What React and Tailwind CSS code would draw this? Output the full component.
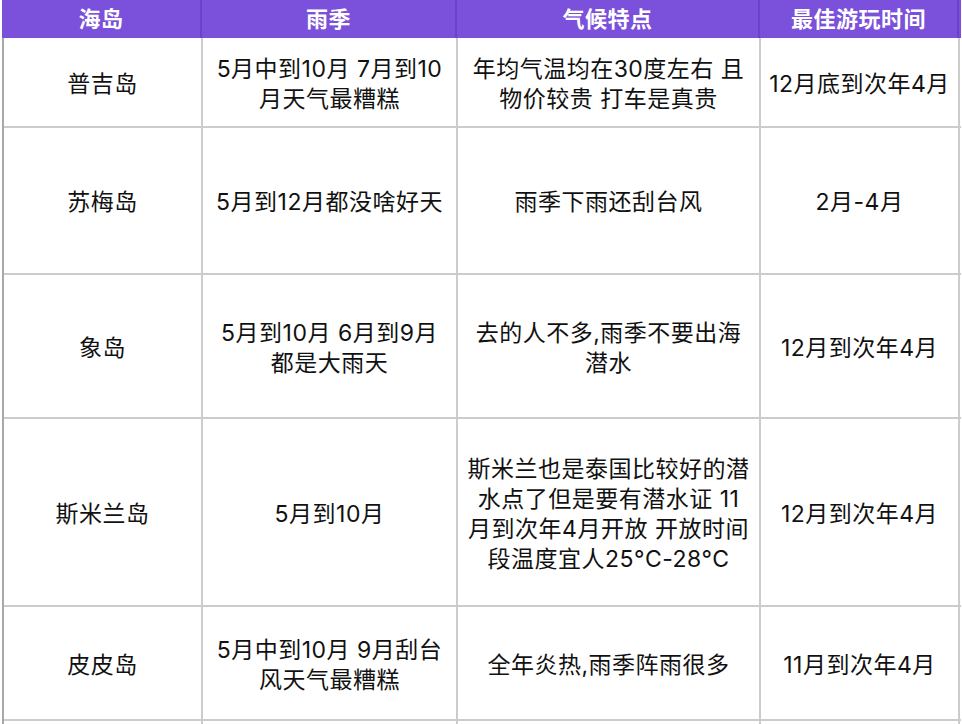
import React from "react";

const columns = [
  { title: "海岛", w: "w-[200px]" },
  { title: "雨季", w: "w-[255px]" },
  { title: "气候特点", w: "w-[303px]" },
  { title: "最佳游玩时间", w: "w-[199px]" },
];

const rows = [
  {
    h: "h-[90px]",
    cells: [["普吉岛"], ["5月中到10月 7月到10", "月天气最糟糕"], ["年均气温均在30度左右 且", "物价较贵 打车是真贵"], ["12月底到次年4月"]],
  },
  {
    h: "h-[147px]",
    cells: [["苏梅岛"], ["5月到12月都没啥好天"], ["雨季下雨还刮台风"], ["2月-4月"]],
  },
  {
    h: "h-[144px]",
    cells: [["象岛"], ["5月到10月 6月到9月", "都是大雨天"], ["去的人不多,雨季不要出海", "潜水"], ["12月到次年4月"]],
  },
  {
    h: "h-[188px]",
    cells: [
      ["斯米兰岛"],
      ["5月到10月"],
      ["斯米兰也是泰国比较好的潜", "水点了但是要有潜水证 11", "月到次年4月开放 开放时间", "段温度宜人25°C-28°C"],
      ["12月到次年4月"],
    ],
  },
  {
    h: "h-[114px]",
    cells: [["皮皮岛"], ["5月中到10月 9月刮台", "风天气最糟糕"], ["全年炎热,雨季阵雨很多"], ["11月到次年4月"]],
  },
  {
    h: "h-[60px]",
    cells: [[""], [""], [""], [""]],
  },
];

const Cell = ({ lines, w }) => (
  <div className={`${w} shrink-0 flex items-center justify-center border-r-2 border-[#cccccc] px-1 pt-[3px] text-center`}>
    <p className="whitespace-nowrap text-[23px] leading-[30px] tracking-[0.5px] text-[#111111]">
      {lines.map((line, i) => (
        <React.Fragment key={i}>
          {i > 0 && <br />}
          {line}
        </React.Fragment>
      ))}
    </p>
  </div>
);

export default function App() {
  return (
    <div
      className="w-[962px] h-[724px] overflow-hidden bg-white"
      style={{ fontFamily: 'Inter, "Noto Sans CJK SC", "Noto Sans", sans-serif' }}
    >
      <div className="ml-[2px] w-[959px]">
        <div className="flex h-[38px] bg-[#7b50da]">
          {columns.map((c) => (
            <div
              key={c.title}
              className={`${c.w} shrink-0 flex items-center justify-center border-r-2 border-[#6c42c8] text-[22px] font-bold tracking-[0.5px] text-white`}
            >
              {c.title}
            </div>
          ))}
        </div>
        <div className="border-l-2 border-[#a8a8a8]">
          {rows.map((r, i) => (
            <div key={i} className={`flex ${r.h} border-b-2 border-[#cccccc]`}>
              {r.cells.map((lines, j) => (
                <Cell key={j} lines={lines} w={j === 0 ? "w-[199px]" : columns[j].w} />
              ))}
            </div>
          ))}
        </div>
      </div>
    </div>
  );
}
